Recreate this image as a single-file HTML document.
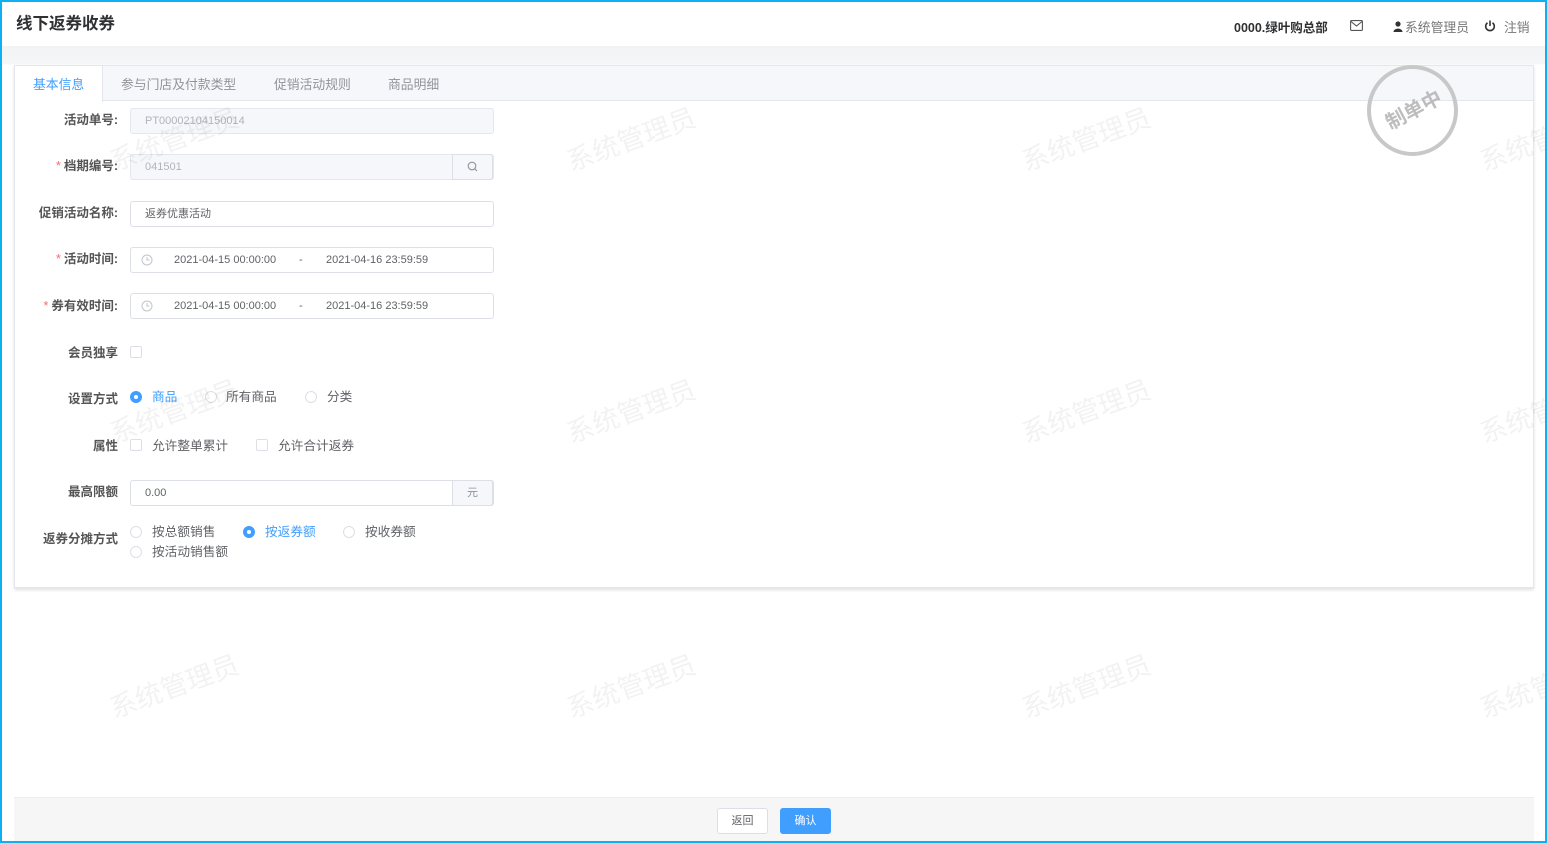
<!DOCTYPE html>
<html><head><meta charset="utf-8"><style>
*{box-sizing:border-box;margin:0;padding:0}
body{width:1547px;height:843px;overflow:hidden;position:relative;background:#fff;font-family:"Liberation Sans","Noto Sans CJK SC",sans-serif;font-size:12px;color:#606266}
.a{position:absolute}
.frame{position:absolute;left:0;top:0;width:1547px;height:843px;border:2px solid #0db1f2;pointer-events:none;z-index:50}
.lbl{position:absolute;right:1429px;font-weight:bold;color:#555;font-size:12.5px;white-space:nowrap;line-height:16px}
.req{color:#f56c6c;margin-right:3px;font-weight:normal}
.inp{position:absolute;left:130px;width:364px;height:26px;border:1px solid #dcdfe6;border-radius:3px;background:#fff;line-height:24px;padding-left:14px;font-size:11px;color:#606266}
.dis{background:#f5f7fa;color:#b0b4bb;border-color:#e4e7ed}
.app{position:absolute;right:0;top:-1px;width:41px;height:26px;border:1px solid #dcdfe6;border-radius:0 3px 3px 0;background:#f5f7fa;text-align:center;line-height:24px;color:#909399}
.rad{position:absolute;width:12px;height:12px;border:1px solid #dcdfe6;border-radius:50%;background:#fff}
.rad.on{border-color:#409eff;background:#409eff}
.rad.on::after{content:"";position:absolute;left:3px;top:3px;width:4px;height:4px;border-radius:50%;background:#fff}
.chk{position:absolute;width:12px;height:12px;border:1px solid #dcdfe6;border-radius:2px;background:#fff}
.t{position:absolute;font-size:12.7px;color:#606266;white-space:nowrap;line-height:16px}
.wm{position:absolute;font-size:27px;color:rgba(0,0,0,0.05);transform:rotate(-20deg);white-space:nowrap;z-index:5}
.tab{position:absolute;top:74px;font-size:12.8px;color:#909399}
</style></head><body>
<div class="frame"></div>
<div class="a" style="left:16px;top:10px;font-size:16.5px;font-weight:bold;color:#303133">线下返券收券</div>
<div class="a" style="left:1234px;top:17px;font-size:12.5px;font-weight:bold;color:#303133">0000.绿叶购总部</div>
<svg class="a" style="left:1350px;top:20px" width="13" height="11" viewBox="0 0 13 11"><rect x="0.6" y="0.6" width="11.8" height="9.8" rx="1" fill="none" stroke="#555" stroke-width="1.1"/><path d="M1 1.5 L6.5 6 L12 1.5" fill="none" stroke="#555" stroke-width="1.1"/></svg>
<svg class="a" style="left:1393px;top:21px" width="10" height="11" viewBox="0 0 10 11"><circle cx="5" cy="3" r="2.6" fill="#333"/><path d="M0.5 11 C0.5 6.5 9.5 6.5 9.5 11Z" fill="#333"/></svg>
<div class="a" style="left:1405px;top:17px;font-size:12.8px;color:#777">系统管理员</div>
<svg class="a" style="left:1484px;top:20px" width="12" height="12" viewBox="0 0 12 12"><path d="M3.5 2.8 A4.3 4.3 0 1 0 8.5 2.8" fill="none" stroke="#333" stroke-width="1.6"/><path d="M6 0.5 V6" stroke="#333" stroke-width="1.6"/></svg>
<div class="a" style="left:1504px;top:17px;font-size:12.8px;color:#777">注销</div>
<div class="a" style="left:2px;top:46px;width:1543px;height:752px;background:linear-gradient(#f2f3f5 0,#f5f6f8 18px,#fff 19px)"></div>
<div class="a" style="left:14px;top:65px;width:1520px;height:523px;background:#fff;border:1px solid #e4e7ed;box-shadow:0 2px 3px rgba(0,0,0,0.12)"></div>
<div class="a" style="left:15px;top:66px;width:1518px;height:35px;background:#f5f7fa;border-bottom:1px solid #e4e7ed"></div>
<div class="a" style="left:15px;top:66px;width:88px;height:36px;background:#fff;border-right:1px solid #e4e7ed"></div>
<div class="tab" style="left:33px;color:#409eff">基本信息</div>
<div class="tab" style="left:121px">参与门店及付款类型</div>
<div class="tab" style="left:274px">促销活动规则</div>
<div class="tab" style="left:388px">商品明细</div>
<div class="a" style="left:1367px;top:65px;width:91px;height:91px;border:4px solid #c8c8c8;border-radius:50%;z-index:6"></div>
<div class="a" style="left:1377px;top:94px;width:72px;text-align:center;font-size:20px;font-weight:bold;color:#bdbdbd;transform:rotate(-28deg);z-index:6">制单中</div>
<div class="lbl" style="top:112px">活动单号:</div>
<div class="inp dis" style="top:108px">PT00002104150014</div>
<div class="lbl" style="top:158px"><span class="req">*</span>档期编号:</div>
<div class="inp dis" style="top:154px">041501<div class="app"><svg width="11" height="11" viewBox="0 0 11 11" style="margin-top:6px"><circle cx="5" cy="5" r="3.8" fill="none" stroke="#909399" stroke-width="1.1"/><path d="M7.8 7.8 L10 10" stroke="#909399" stroke-width="1.1"/></svg></div></div>
<div class="lbl" style="top:205px">促销活动名称:</div>
<div class="inp" style="top:201px">返券优惠活动</div>
<div class="lbl" style="top:251px"><span class="req">*</span>活动时间:</div>
<div class="inp" style="top:247px"><svg class="a" style="left:10px;top:6px" width="12" height="12" viewBox="0 0 12 12"><circle cx="6" cy="6" r="5" fill="none" stroke="#c0c4cc"/><path d="M6 3 V6 H8.5" fill="none" stroke="#c0c4cc"/></svg><span class="a" style="left:43px">2021-04-15 00:00:00</span><span class="a" style="left:168px">-</span><span class="a" style="left:195px">2021-04-16 23:59:59</span></div>
<div class="lbl" style="top:298px"><span class="req">*</span>券有效时间:</div>
<div class="inp" style="top:293px"><svg class="a" style="left:10px;top:6px" width="12" height="12" viewBox="0 0 12 12"><circle cx="6" cy="6" r="5" fill="none" stroke="#c0c4cc"/><path d="M6 3 V6 H8.5" fill="none" stroke="#c0c4cc"/></svg><span class="a" style="left:43px">2021-04-15 00:00:00</span><span class="a" style="left:168px">-</span><span class="a" style="left:195px">2021-04-16 23:59:59</span></div>
<div class="lbl" style="top:345px">会员独享</div>
<div class="chk" style="left:130px;top:346px"></div>
<div class="lbl" style="top:391px">设置方式</div>
<div class="rad on" style="left:130px;top:391px"></div><div class="t" style="left:152px;top:389px;color:#409eff">商品</div>
<div class="rad" style="left:205px;top:391px"></div><div class="t" style="left:226px;top:389px">所有商品</div>
<div class="rad" style="left:305px;top:391px"></div><div class="t" style="left:327px;top:389px">分类</div>
<div class="lbl" style="top:438px">属性</div>
<div class="chk" style="left:130px;top:439px"></div><div class="t" style="left:152px;top:438px">允许整单累计</div>
<div class="chk" style="left:256px;top:439px"></div><div class="t" style="left:278px;top:438px">允许合计返券</div>
<div class="lbl" style="top:484px">最高限额</div>
<div class="inp" style="top:480px">0.00<div class="app">元</div></div>
<div class="lbl" style="top:531px">返券分摊方式</div>
<div class="rad" style="left:130px;top:526px"></div><div class="t" style="left:152px;top:524px">按总额销售</div>
<div class="rad on" style="left:243px;top:526px"></div><div class="t" style="left:265px;top:524px;color:#409eff">按返券额</div>
<div class="rad" style="left:343px;top:526px"></div><div class="t" style="left:365px;top:524px">按收券额</div>
<div class="rad" style="left:130px;top:546px"></div><div class="t" style="left:152px;top:544px">按活动销售额</div>
<div class="wm" style="left:106px;top:118px">系统管理员</div>
<div class="wm" style="left:563px;top:118px">系统管理员</div>
<div class="wm" style="left:1018px;top:118px">系统管理员</div>
<div class="wm" style="left:1476px;top:118px">系统管理员</div>
<div class="wm" style="left:106px;top:390px">系统管理员</div>
<div class="wm" style="left:563px;top:390px">系统管理员</div>
<div class="wm" style="left:1018px;top:390px">系统管理员</div>
<div class="wm" style="left:1476px;top:390px">系统管理员</div>
<div class="wm" style="left:106px;top:665px">系统管理员</div>
<div class="wm" style="left:563px;top:665px">系统管理员</div>
<div class="wm" style="left:1018px;top:665px">系统管理员</div>
<div class="wm" style="left:1476px;top:665px">系统管理员</div>
<div class="a" style="left:14px;top:797px;width:1520px;height:46px;background:#f6f6f6;border-top:1px solid #eee"></div>
<div class="a" style="left:717px;top:808px;width:51px;height:26px;border:1px solid #dcdfe6;border-radius:3px;background:#fff;text-align:center;line-height:24px;font-size:11px;color:#606266">返回</div>
<div class="a" style="left:780px;top:808px;width:51px;height:26px;border-radius:3px;background:#409eff;text-align:center;line-height:26px;font-size:11px;color:#fff">确认</div>
</body></html>
